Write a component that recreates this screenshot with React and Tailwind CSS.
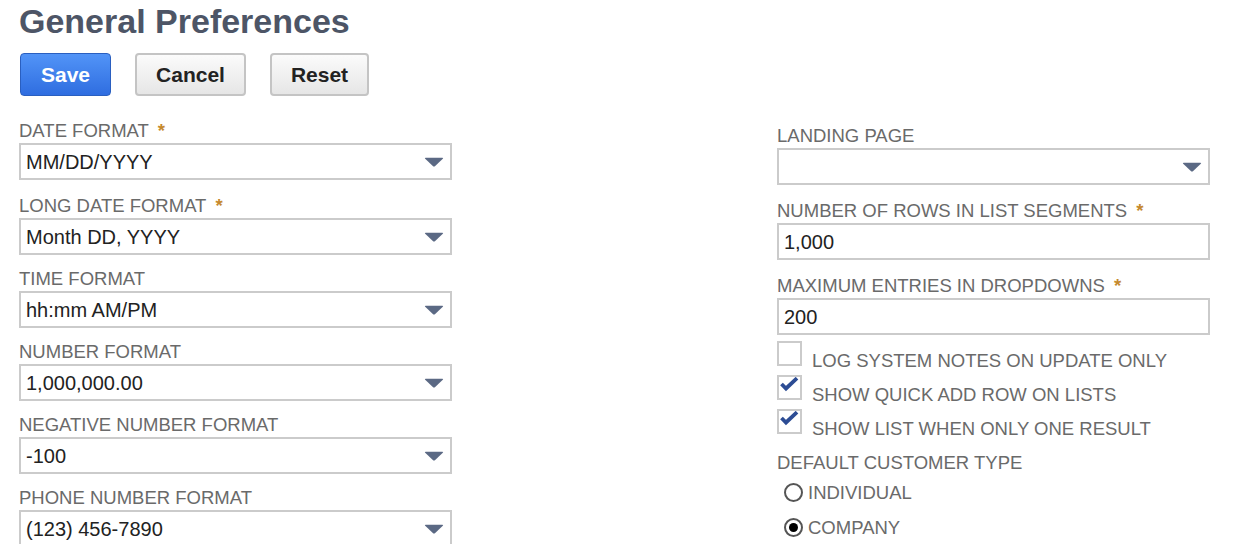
import React from "react";

const leftFields = [
  { label: "DATE FORMAT", value: "MM/DD/YYYY", required: true },
  { label: "LONG DATE FORMAT", value: "Month DD, YYYY", required: true },
  { label: "TIME FORMAT", value: "hh:mm AM/PM" },
  { label: "NUMBER FORMAT", value: "1,000,000.00" },
  { label: "NEGATIVE NUMBER FORMAT", value: "-100" },
  { label: "PHONE NUMBER FORMAT", value: "(123) 456-7890" },
];

const checks = [
  { label: "LOG SYSTEM NOTES ON UPDATE ONLY", checked: false },
  { label: "SHOW QUICK ADD ROW ON LISTS", checked: true },
  { label: "SHOW LIST WHEN ONLY ONE RESULT", checked: true },
];

const Arrow = () => (
  <svg width="20" height="10" viewBox="0 0 20 10" className="shrink-0">
    <path d="M1.5 0.8 H18.5 Q19.6 0.8 18.8 1.8 L11.2 9 Q10 10.1 8.8 9 L1.2 1.8 Q0.4 0.8 1.5 0.8 Z" fill="#5b6984" />
  </svg>
);

const FieldLabel = ({ label, required }) => (
  <div className={`h-[21px] leading-[22px] mb-[2px] text-[18.5px] text-[#6a6a6a] whitespace-nowrap ${required ? "mt-[2px]" : ""}`}>
    {label}
    {required && <span className="ml-[9px] text-[#c5892e] font-bold">*</span>}
  </div>
);

const SelectField = ({ label, value, required }) => (
  <div>
    <FieldLabel label={label} required={required} />
    <div className="h-[37px] w-[433px] border-2 border-[#cbcbcb] bg-white flex items-center justify-between pl-[5px] pr-[6px]">
      <span className="text-[20px] text-[#222] whitespace-nowrap">{value}</span>
      <Arrow />
    </div>
  </div>
);

const TextField = ({ label, value, required }) => (
  <div>
    <FieldLabel label={label} required={required} />
    <div className="h-[37px] w-[433px] border-2 border-[#cbcbcb] bg-white flex items-center pl-[5px]">
      <span className="text-[20px] text-[#222]">{value}</span>
    </div>
  </div>
);

const Checkbox = ({ label, checked }) => (
  <div className="h-[34px] flex items-start">
    <div className="relative w-[25px] h-[25px] border-2 border-[#cbcbcb] bg-white shrink-0">
      {checked && (
        <svg width="21" height="21" viewBox="0 0 21 21" className="absolute left-0 top-0">
          <path d="M2.5 7 L7 11.5 L18 1.2" fill="none" stroke="#2c4c94" strokeWidth="3.8" strokeLinejoin="miter" />
        </svg>
      )}
    </div>
    <span className="ml-[10px] mt-[9px] text-[18.5px] leading-[21px] text-[#6a6a6a] whitespace-nowrap">{label}</span>
  </div>
);

const Radio = ({ label, selected }) => (
  <div className="h-[35px] flex items-center ml-[7px]">
    <div className="w-[19px] h-[19px] rounded-full border-2 border-[#555] bg-white flex items-center justify-center shrink-0">
      {selected && <div className="w-[9px] h-[9px] rounded-full bg-black" />}
    </div>
    <span className="ml-[5px] text-[18.5px] leading-[21px] text-[#6a6a6a]">{label}</span>
  </div>
);

export default function App() {
  return (
    <div className="w-[1234px] h-[544px] overflow-hidden bg-white px-[19px] pt-[1px] font-['Liberation_Sans',Arial,sans-serif]">
      {/* Header */}
      <h1 className="text-[34px] leading-[40px] font-bold text-[#4d5566]">General Preferences</h1>

      <div className="mt-[12px] ml-[1px] flex gap-[24px]">
        <button className="w-[91px] h-[43px] rounded-[4px] border border-[#2a5fc0] bg-gradient-to-b from-[#5294f7] to-[#2f6de0] text-white text-[21px] font-bold">
          Save
        </button>
        <button className="w-[111px] h-[43px] rounded-[4px] border-2 border-[#c4c4c4] bg-gradient-to-b from-[#fbfbfb] to-[#e6e6e6] text-[#222] text-[21px] font-bold">
          Cancel
        </button>
        <button className="w-[99px] h-[43px] rounded-[4px] border-2 border-[#c4c4c4] bg-gradient-to-b from-[#fbfbfb] to-[#e6e6e6] text-[#222] text-[21px] font-bold">
          Reset
        </button>
      </div>

      {/* Form columns */}
      <div className="mt-[22px] flex gap-[325px]">
        <div className="flex flex-col gap-[13px]">
          {leftFields.map((f) => (
            <SelectField key={f.label} {...f} />
          ))}
        </div>

        <div className="pt-[7px] flex flex-col">
          <div className="flex flex-col gap-[13px]">
            <SelectField label="LANDING PAGE" value="" />
            <TextField label="NUMBER OF ROWS IN LIST SEGMENTS" value="1,000" required />
            <TextField label="MAXIMUM ENTRIES IN DROPDOWNS" value="200" required />
          </div>
          <div className="mt-[6px]">
            {checks.map((c) => (
              <Checkbox key={c.label} {...c} />
            ))}
          </div>
          <div className="mt-[9px] h-[21px] leading-[22px] text-[18.5px] text-[#6a6a6a]">DEFAULT CUSTOMER TYPE</div>
          <div className="mt-[2px]">
            <Radio label="INDIVIDUAL" />
            <Radio label="COMPANY" selected />
          </div>
        </div>
      </div>
    </div>
  );
}
